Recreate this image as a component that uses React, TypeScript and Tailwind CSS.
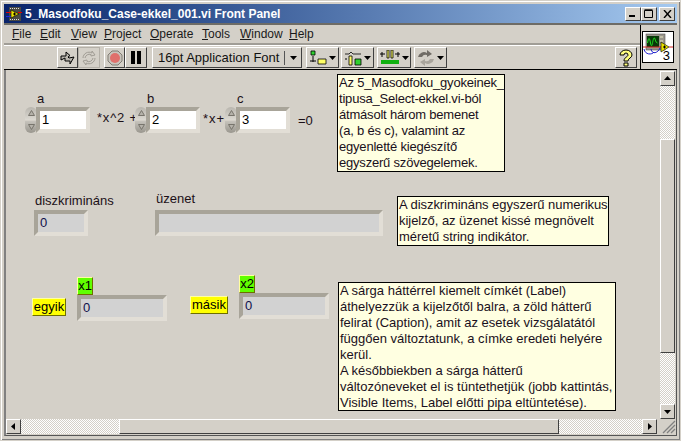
import React from "react";

const F = "[font-family:'Liberation_Sans',sans-serif]";

function Caret() {
  return <svg width="7" height="4" viewBox="0 0 7 4"><path d="M0 0h7L3.5 4z" fill="#000" /></svg>;
}

function Btn({ children, className }: { children: React.ReactNode; className: string }) {
  return (
    <div className={"flex items-center justify-center h-[21px] border border-t-white border-l-white border-r-[#404040] border-b-[#404040] bg-[#d4d0c8] " + className}>
      {children}
    </div>
  );
}

function DropBtn({ children, className }: { children: React.ReactNode; className: string }) {
  return (
    <Btn className={"gap-[2px] " + className}>
      {children}
      <Caret />
    </Btn>
  );
}

function Spinner() {
  return (
    <div className="flex flex-col w-[12px] h-[26px] gap-px">
      <div className="h-[12.5px] rounded-t-[6px] bg-gradient-to-b from-[#b8b5ae] to-[#dcd9d2] flex items-center justify-center">
        <svg width="7" height="6" viewBox="0 0 7 6"><path d="M.5 5.5L3.5.5l3 5z" fill="#b5b2aa" stroke="#77746c" /></svg>
      </div>
      <div className="h-[12.5px] rounded-b-[6px] bg-gradient-to-b from-[#c6c3bc] to-[#99968e] flex items-center justify-center">
        <svg width="7" height="6" viewBox="0 0 7 6"><path d="M.5.5L3.5 5.5l3-5z" fill="#b5b2aa" stroke="#77746c" /></svg>
      </div>
    </div>
  );
}

function Frame({ className, white, children }: { className: string; white?: boolean; children?: React.ReactNode }) {
  return (
    <div className={"absolute border-[4px] border-t-[#a8a499] border-l-[#a8a499] border-r-[#e2ded6] border-b-[#e2ded6] " + className}>
      <div className={"w-full h-full pl-[2px] text-[13px] leading-[18px] " + (white ? "bg-white text-black" : "bg-[#d2d2d2] text-[#10104a]")}>{children}</div>
    </div>
  );
}

function Note({ className, lines }: { className: string; lines: string[] }) {
  return (
    <div className={"absolute border border-black bg-[#ffffe1] pl-[1px] text-[13px] leading-[16px] text-[#1a1020] whitespace-nowrap " + className}>
      {lines.map((l) => <div key={l}>{l}</div>)}
    </div>
  );
}

function Txt({ className, children }: { className: string; children: React.ReactNode }) {
  return <div className={"absolute text-[13px] leading-[16px] text-[#1c1018] whitespace-nowrap " + className}>{children}</div>;
}

function Tag({ className, children }: { className: string; children: React.ReactNode }) {
  return (
    <div className={"absolute flex items-center justify-center text-[13px] text-black border border-t-[#ffffa0] border-l-[#ffffa0] border-r-[#6e6e00] border-b-[#6e6e00] " + className}>
      {children}
    </div>
  );
}

const dither = "bg-[repeating-conic-gradient(#ffffff_0_25%,#d4d0c8_0_50%)] bg-[length:2px_2px]";

function ScrollBtn({ d }: { d: string }) {
  return (
    <div className="w-[15px] h-[15px] shrink-0 flex items-center justify-center bg-[#d4d0c8] border border-t-white border-l-white border-r-[#404040] border-b-[#404040]">
      <svg width="9" height="9" viewBox="0 0 9 9"><path d={d} fill="#000" /></svg>
    </div>
  );
}

function Menu({ w, first, rest }: { w: string; first: string; rest: string }) {
  return (
    <div className={w}><span className="underline">{first}</span>{rest}</div>
  );
}

export default function App() {
  return (
    <div className={"w-[681px] h-[441px] overflow-hidden bg-[#d4d0c8] border border-[#d4d0c8] flex flex-col p-[3px] shadow-[inset_1px_1px_0_#ffffff,inset_-1px_-1px_0_#808080,1px_1px_0_#404040] " + F}>
      {/* title bar */}
      <div className="h-[19px] shrink-0 flex items-center bg-gradient-to-r from-[#0a246a] to-[#a6caf0] pl-[2px] pr-[2px]">
        <svg width="16" height="16" viewBox="0 0 16 16" className="shrink-0 mr-[3px]">
          <rect x="3" y="1" width="12" height="14" fill="#4a4a44" />
          <path d="M4 2h1v1H4zM6 2h1v1H6zM8 2h1v1H8zM10 2h1v1h-1zM12 2h1v1h-1zM4 13h1v1H4zM6 13h1v1H6zM8 13h1v1H8zM10 13h1v1h-1zM12 13h1v1h-1z" fill="#ddd" />
          <path d="M5 4l8 4-8 4z" fill="#e8e000" stroke="#000" strokeWidth=".6" />
          <path d="M0 6.500h5M12 6.500h4" stroke="#e00000" />
          <path d="M0 10.500h5" stroke="#2222dd" />
          <path d="M7 8h3M8.500 6.500v3" stroke="#000" />
        </svg>
        <div className="text-white font-bold text-[12px] leading-[18px] whitespace-nowrap flex-1">5_Masodfoku_Case-ekkel_001.vi Front Panel</div>
        <div className="flex items-center shrink-0">
          {["min", "max"].map((k) => (
            <div key={k} className="w-[16px] h-[14px] bg-[#d4d0c8] border border-t-white border-l-white border-r-[#404040] border-b-[#404040] flex items-center justify-center">
              <svg width="10" height="9" viewBox="0 0 10 9">
                {k === "min" ? <path d="M1 6h6v2H1z" fill="#000" /> : <path d="M.5 1.500h8v7h-8zM.5.800h8" fill="none" stroke="#000" />}
              </svg>
            </div>
          ))}
          <div className="ml-[2px] w-[16px] h-[14px] bg-[#d4d0c8] border border-t-white border-l-white border-r-[#404040] border-b-[#404040] flex items-center justify-center">
            <svg width="9" height="8" viewBox="0 0 9 8"><path d="M1 0l7 8M8 0L1 8" fill="none" stroke="#000" strokeWidth="1.400" /></svg>
          </div>
        </div>
      </div>
      {/* header */}
      <div className="h-[47px] shrink-0 flex border-t-2 border-t-[#6e6c66] border-b border-b-black">
        <div className="w-[636px] shrink-0 flex flex-col">
          <div className="h-[20px] shrink-0 flex items-center pl-[8px] text-[12px] text-[#1a1a1a] border-b-2 border-b-[#a09d96] shadow-[0_1px_0_#ffffff]">
            <Menu w="w-[28px]" first="F" rest="ile" />
            <Menu w="w-[31px]" first="E" rest="dit" />
            <Menu w="w-[33px]" first="V" rest="iew" />
            <Menu w="w-[46px]" first="P" rest="roject" />
            <Menu w="w-[52px]" first="O" rest="perate" />
            <Menu w="w-[38px]" first="T" rest="ools" />
            <Menu w="w-[49px]" first="W" rest="indow" />
            <Menu w="w-[40px]" first="H" rest="elp" />
          </div>
          <div className="flex items-center pl-[53px] pt-[2px]">
            <Btn className="w-[21px]">
              <svg width="17" height="14" viewBox="0 0 17 14"><path d="M2 5h5V1l4 3.500L9 6l1 1 5-1-4 7v-3H6V7L2 9z" fill="#b8b5ad" stroke="#000" /></svg>
            </Btn>
            <div className="w-[22px] h-[21px] flex items-center justify-center border border-[#b4b0a8]">
              <svg width="16" height="16" viewBox="0 0 16 16"><path d="M2 8a6 6 0 0 1 9-5V1l3 4-4 1V4.500A4.500 4.500 0 0 0 4 8M14 8a6 6 0 0 1-9 5v2l-3-4 4-1v1.500A4.500 4.500 0 0 0 12 8" fill="#d4d0c8" stroke="#a09c94" /></svg>
            </div>
            <Btn className="w-[21px] ml-[4px]">
              <svg width="16" height="16" viewBox="0 0 16 16"><path d="M5 1h6l4 4v6l-4 4H5l-4-4V5z" fill="#c8c4bc" stroke="#807c74" /><circle cx="8" cy="8" r="5" fill="#e0706c" /></svg>
            </Btn>
            <Btn className="w-[22px]">
              <svg width="12" height="13" viewBox="0 0 12 13"><path d="M1 0h4v13H1zM7 0h4v13H7z" fill="#000" /></svg>
            </Btn>
            <Btn className="w-[150px] ml-[5px] justify-start pl-[5px] text-[13px] text-[#111] whitespace-nowrap">
              <div className="flex-1">16pt Application Font</div>
              <div className="w-[17px] h-[14px] border-l border-l-[#555] flex items-center justify-center"><Caret /></div>
            </Btn>
            <DropBtn className="w-[33px] ml-[4px]">
              <svg width="18" height="16" viewBox="0 0 18 16"><path d="M2 1h4v4H2z" fill="#2fd02f" stroke="#000" strokeWidth=".8" /><path d="M4 6v6M1 11h6" stroke="#000" /><path d="M9 9h8v5H9z" fill="#ffff66" stroke="#000" strokeWidth=".8" /></svg>
            </DropBtn>
            <DropBtn className="w-[33px] ml-[2px]">
              <svg width="18" height="16" viewBox="0 0 18 16"><path d="M1 4h4l2-2 2 2h8" fill="none" stroke="#000" strokeWidth=".8" /><path d="M5 6h3v9H5z" fill="#ffff66" stroke="#000" strokeWidth=".8" /><path d="M11 9h6v6h-6z" fill="#2fd02f" stroke="#000" strokeWidth=".8" /><path d="M1 9h2" stroke="#000" /></svg>
            </DropBtn>
            <DropBtn className="w-[34px] ml-[3px]">
              <svg width="20" height="16" viewBox="0 0 20 16"><path d="M0 4h5M15 4h5M2 2v5M18 2v5" stroke="#000" /><path d="M7 0h2v8H7zM11 0h2v8h-2z" fill="#ffff66" stroke="#000" strokeWidth=".8" /><path d="M1 10h18v4H1z" fill="#10b010" /></svg>
            </DropBtn>
            <DropBtn className="w-[33px] ml-[3px]">
              <svg width="18" height="16" viewBox="0 0 18 16"><path d="M1 7a6 6 0 0 1 9-4V0l5 4-5 3V5a4 4 0 0 0-5 2z" fill="#706c66" /><path d="M17 9a6 6 0 0 1-9 4v3l-5-4 5-3v2a4 4 0 0 0 5-2z" fill="#a8a49c" /></svg>
            </DropBtn>
            <Btn className="w-[22px] ml-[168px]">
              <svg width="16" height="18" viewBox="0 0 16 18"><path d="M2 6a6 5 0 0 1 12 0c0 3-4 3-4 6H6c0-4 4-4 4-6a2 2 0 0 0-4 0z" fill="#ffff80" stroke="#000" /><path d="M6 14h4v3H6z" fill="#ffff80" stroke="#000" /></svg>
            </Btn>
          </div>
        </div>
        <div className="flex-1 border-l border-l-black flex items-start pl-[1px] pt-[6px]">
          <div className="w-[32px] h-[32px] bg-white border border-black relative">
            <svg width="30" height="30" viewBox="0 0 30 30">
              <rect x="3" y="2" width="19" height="16" fill="#9a968c" stroke="#555" strokeWidth=".6" />
              <rect x="4" y="4" width="12" height="11" fill="#083808" />
              <path d="M4.500 11c1-6 2-6 3 0s2 0 2 0 1-6 2-5 1 5 3 5" fill="none" stroke="#20e020" />
              <path d="M17 5h3M17 9h3M17 13h3" stroke="#e8e8c0" />
              <path d="M1 17c1 6 8 6 10 3M8 17c1 6 7 4 9-1" fill="none" stroke="#1a1acc" />
              <path d="M0 15h18" stroke="#d02020" />
              <path d="M18 10l8 5-8 5z" fill="#e8e000" stroke="#000" strokeWidth=".6" />
              <path d="M20 15h3M21.500 13.500v3" stroke="#000" />
              <path d="M26 15h4" stroke="#d02020" />
            </svg>
            <div className="absolute right-[3px] bottom-0 text-[13px] leading-[13px] text-black">3</div>
          </div>
        </div>
      </div>
      {/* panel row */}
      <div className="flex-1 min-h-0 flex flex-col border-l-2 border-l-[#808080] border-r border-r-[#555555] border-b border-b-[#555555] mb-[1px]">
        <div className="flex-1 min-h-0 flex">
          <div className="relative flex-1 min-w-0 overflow-hidden">
            <Txt className="left-[31px] top-[21px]">a</Txt>
            <div className="absolute left-[19px] top-[37px]"><Spinner /></div>
            <Frame white className="left-[30px] top-[37px] w-[54px] h-[26px]">1</Frame>
            <Txt className="left-[91px] top-[40px] tracking-[0.8px]">*x^2 +</Txt>
            <Txt className="left-[141px] top-[21px]">b</Txt>
            <div className="absolute left-[129px] top-[37px]"><Spinner /></div>
            <Frame white className="left-[140px] top-[37px] w-[54px] h-[26px]">2</Frame>
            <Txt className="left-[197px] top-[41px] tracking-[1px]">*x+</Txt>
            <Txt className="left-[231px] top-[21px]">c</Txt>
            <div className="absolute left-[219px] top-[37px]"><Spinner /></div>
            <Frame white className="left-[230px] top-[37px] w-[54px] h-[26px]">3</Frame>
            <Txt className="left-[292px] top-[43px]">=0</Txt>

            <Txt className="left-[29px] top-[123px]">diszkrimináns</Txt>
            <Frame className="left-[28px] top-[140px] w-[54px] h-[26px]">0</Frame>
            <Txt className="left-[150px] top-[121px]">üzenet</Txt>
            <Frame className="left-[149px] top-[140px] w-[228px] h-[26px]" />

            <Tag className="left-[26px] top-[228px] w-[34px] h-[18px] bg-[#ffff00]">egyik</Tag>
            <Tag className="left-[71px] top-[207px] w-[16px] h-[18px] bg-[#60ff00]">x1</Tag>
            <Frame className="left-[71px] top-[225px] w-[90px] h-[26px]">0</Frame>
            <Tag className="left-[184px] top-[226px] w-[38px] h-[18px] bg-[#ffff00]">másik</Tag>
            <Tag className="left-[233px] top-[205px] w-[16px] h-[18px] bg-[#60ff00]">x2</Tag>
            <Frame className="left-[233px] top-[223px] w-[90px] h-[26px]">0</Frame>

            <Note className="left-[331px] top-[4px] w-[168px] h-[98px] tracking-[-0.2px]" lines={["Az 5_Masodfoku_gyokeinek_", "tipusa_Select-ekkel.vi-ból", "átmásolt három bemenet", "(a, b és c), valamint az", "egyenletté kiegészítő", "egyszerű szövegelemek."]} />
            <Note className="left-[391px] top-[126px] w-[212px] h-[50px] tracking-[-0.05px]" lines={["A diszkrimináns egyszerű numerikus", "kijelző, az üzenet kissé megnövelt", "méretű string indikátor."]} />
            <Note className="left-[332px] top-[212px] w-[278px] h-[129px]" lines={["A sárga háttérrel kiemelt címkét (Label)", "áthelyezzük a kijelzőtől balra, a zöld hátterű", "felirat (Caption), amit az esetek vizsgálatától", "függően változtatunk, a címke eredeti helyére", "kerül.", "A későbbiekben a sárga hátterű", "változóneveket el is tüntethetjük (jobb kattintás,", "Visible Items, Label előtti pipa eltüntetése)."]} />
          </div>
          {/* vertical scrollbar */}
          <div className="w-[15px] shrink-0 mr-[1px] pt-px flex flex-col">
            <ScrollBtn d="M4.500 2L8 6H1z" />
            <div className={"h-[53px] shrink-0 " + dither} />
            <div className="flex-1 border border-t-white border-l-white border-r-[#404040] border-b-[#404040]" />
            <div className={"h-[51px] shrink-0 " + dither} />
            <ScrollBtn d="M1 3h7L4.500 7z" />
          </div>
        </div>
        {/* horizontal scrollbar */}
        <div className="h-[15px] shrink-0 flex mb-[1px]">
          <ScrollBtn d="M2 4.500L6 1v7z" />
          <div className={"w-[98px] shrink-0 " + dither} />
          <div className="w-[440px] shrink-0 border border-t-white border-l-white border-r-[#404040] border-b-[#404040]" />
          <div className={"w-[83px] shrink-0 " + dither} />
          <ScrollBtn d="M3 1l4 3.500L3 8z" />
          <div className="flex-1 flex items-end justify-end">
            <svg width="14" height="14" viewBox="0 0 14 14"><path d="M13 1L1 13M13 5L5 13M13 9L9 13" stroke="#808080" strokeWidth="1.300" fill="none" /></svg>
          </div>
        </div>
      </div>
    </div>
  );
}
